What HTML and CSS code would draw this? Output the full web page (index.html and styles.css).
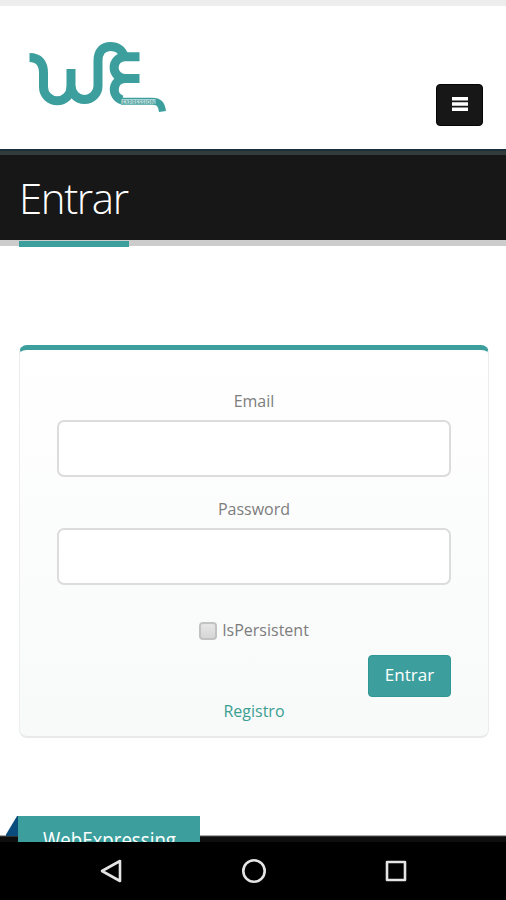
FILE: index.html
```html
<!DOCTYPE html>
<html lang="es">
<head>
	<meta charset="utf-8">
	<title>Entrar</title>
	<link rel="stylesheet" href="styles.css">
</head>
<body>
	<header class="header">
		<svg class="logo" width="142" height="74" viewBox="27 40 142 74">
			<g class="logo-line">
				<path d="M29.500 57.500C39 57.500 43.500 63 43.500 73V87A13.700 13.700 0 0 0 71 87V69"/>
				<path d="M71 86A13.500 13.500 0 0 0 98 86V61C98 51 103 46.500 110.500 46.500C117 46.500 122 50 124 56"/>
				<path d="M139.500 56.700H125A10.900 10.900 0 0 0 125 78.500H139.500"/>
				<path d="M125 78.500A11 11 0 0 0 122 100"/>
			</g>
			<path class="logo-tail" d="M121 101.200H152C159 101.200 161.500 104 162.500 111.500"/>
			<rect class="logo-plate" x="121.500" y="99.200" width="34" height="4.600"/>
			<text class="logo-text" x="122" y="103.800" textLength="33" lengthAdjust="spacingAndGlyphs">EXPRESSION</text>
		</svg>
		<button class="menu-btn">
			<svg width="16" height="14" viewBox="0 0 16 14"><path d="M0 0h16v3.600H0zM0 5.200h16v3.600H0zM0 10.400h16v3.600H0z" fill="#fff"/></svg>
		</button>
	</header>
	<section class="page-top">
		<h1>Entrar</h1>
	</section>
	<main class="main">
		<form class="box">
			<label for="email">Email</label>
			<input class="field" type="text" id="email">
			<label for="password">Password</label>
			<input class="field" type="password" id="password">
			<div class="persist">
				<span class="check"></span>
				<span>IsPersistent</span>
			</div>
			<button class="btn" type="button">Entrar</button>
			<a class="register">Registro</a>
		</form>
	</main>
	<footer class="footer">
		<div class="ribbon">
			<svg width="182" height="27" viewBox="0 0 182 27">
				<text class="ribbon-text" x="25" y="32" textLength="133" lengthAdjust="spacingAndGlyphs">WebExpressing</text>
			</svg>
		</div>
	</footer>
	<nav class="navbar">
		<svg width="24" height="26" viewBox="0 0 24 26"><path d="M21 3V23L3 13Z"/></svg>
		<svg width="26" height="26" viewBox="0 0 26 26"><circle cx="13" cy="13" r="10.700"/></svg>
		<svg width="24" height="26" viewBox="0 0 24 26"><rect x="3" y="4" width="18" height="18"/></svg>
	</nav>
</body>
</html>
```
FILE: styles.css
```css
*{
	box-sizing: border-box;
}
body{
	margin: 0;
	height: 900px;
	overflow: hidden;
	display: flex;
	flex-direction: column;
	background: #fff;
	color: #7d7d7d;
	font-family: "Open Sans", sans-serif;
	font-size: 16px;
}
.header{
	height: 149px;
	border-top: 6px solid #ededed;
	padding: 34px 23px 0 27px;
	display: flex;
	justify-content: space-between;
}
.logo-line{
	fill: none;
	stroke: #3c9f9d;
	stroke-width: 9;
}
.logo-tail{
	fill: none;
	stroke: #3c9f9d;
	stroke-width: 7;
}
.logo-plate{
	fill: #c3e0df;
}
.logo-text{
	font: bold 6px "Open Sans", sans-serif;
	fill: #5aa9a7;
}
.menu-btn{
	width: 47px;
	height: 42px;
	margin-top: 44px;
	padding: 0;
	border: 1px solid #050505;
	border-radius: 4px;
	background: #171717;
	display: flex;
	align-items: center;
	justify-content: center;
}
.menu-btn svg{
	margin-top: -2px;
}
.page-top{
	height: 97px;
	background: #171717;
	border-top: 2px solid #1b2f3b;
	border-bottom: 6px solid #ccc;
	box-shadow: inset 0 4px #303b3a;
	padding-left: 19px;
}
.page-top h1{
	width: 110px;
	height: 96px;
	margin: 0;
	border-bottom: 6px solid #3c9f9d;
	color: #fff;
	font-size: 42px;
	font-weight: 300;
	line-height: 93px;
	letter-spacing: -1.4px;
}
.main{
	height: 570px;
	padding: 99px 17px 0 19px;
}
.box{
	height: 393px;
	padding: 41px 37px 0;
	border: 1px solid #ececec;
	border-top: 5px solid #3c9f9d;
	border-bottom: 2px solid #e9e9e9;
	border-radius: 8px;
	background: linear-gradient(#fff, #f8f9f9);
	display: flex;
	flex-direction: column;
	align-items: center;
}
.box label{
	height: 29px;
	line-height: 20px;
}
.field{
	width: 394px;
	height: 57px;
	margin-bottom: 22px;
	border: 2px solid #dcdcdc;
	border-radius: 7px;
	background: #fff;
}
.persist{
	height: 24px;
	margin-top: 11px;
	display: flex;
	align-items: center;
	gap: 5px;
}
.check{
	width: 18px;
	height: 18px;
	margin-top: 1px;
	border: 2px solid #c2c2c2;
	border-radius: 4px;
	background: linear-gradient(#e6e6e6, #d6d6d6);
}
.btn{
	width: 83px;
	height: 42px;
	margin-top: 13px;
	padding: 0 0 3px;
	align-self: flex-end;
	border: 1px solid #2f9794;
	border-radius: 4px;
	background: #3c9f9d;
	color: #fff;
	font: 17px "Open Sans", sans-serif;
}
.register{
	margin-top: 3px;
	line-height: 22px;
	color: #3c9f92;
}
.footer{
	height: 26px;
	padding-left: 6px;
	background: linear-gradient(#fff 19px, #555 20px, #0e0e0e 21px);
}
.ribbon{
	width: 194px;
	height: 26px;
	padding-left: 12px;
	overflow: hidden;
	background: linear-gradient(#3c9f9d, #3c9f9d) 12px 0 no-repeat, linear-gradient(121deg, transparent 9px, #0a4c7b 10px) 0 0 / 12px 20px no-repeat;
}
.ribbon svg{
	display: block;
}
.ribbon-text{
	font: 22px "Open Sans", sans-serif;
	fill: #fff;
}
.navbar{
	height: 58px;
	padding: 0 98px 0 99px;
	background: #000;
	display: flex;
	align-items: center;
	justify-content: space-between;
}
.navbar svg{
	fill: none;
	stroke: #e4e4e4;
	stroke-width: 2.6;
	stroke-linejoin: round;
}
```
